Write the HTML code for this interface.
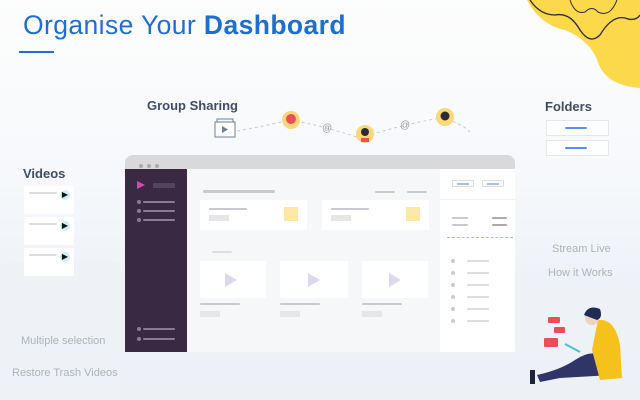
<!DOCTYPE html>
<html><head><meta charset="utf-8"><style>
*{margin:0;padding:0;box-sizing:border-box}
body{width:640px;height:400px;overflow:hidden;position:relative;font-family:"Liberation Sans",sans-serif;background:linear-gradient(180deg,#fdfdfd 0%,#f6f8fb 45%,#eef2f7 70%,#edf0f5 100%)}
.a{position:absolute}
.t{color:#1e6fd0;font-size:26.5px;left:23px;top:10px;letter-spacing:0.4px}
.h{color:#3f4d66;font-weight:bold;font-size:13px}
.g{color:#aeb3bb;font-size:11px}
.bar{position:absolute;height:3px;background:#c9c9cf;border-radius:2px}
.card{position:absolute;background:#fff}
.vc{position:absolute;left:24px;width:50px;height:28px;background:#fff}
.dot{position:absolute;width:4px;height:4px;border-radius:50%;background:#8a7d90}
</style></head><body>
<svg class="a" style="left:0;top:0" width="640" height="400">
<path d="M0 265 Q60 255 120 262 L120 400 L0 400Z" fill="#eef1f5"/>
<path d="M527 0 Q540 25 565 30 Q590 40 598 62 Q605 85 640 88 L640 0Z" fill="#fcd94a"/>
<path d="M530 0 Q540 15 555 15 Q570 12 580 30 Q590 45 600 35 Q612 15 625 18 Q635 22 640 15" fill="none" stroke="#2b2b33" stroke-width="1.3"/>
<path d="M570 0 Q575 15 585 12 Q592 5 598 12 Q610 18 617 0" fill="none" stroke="#2b2b33" stroke-width="1"/>
<path d="M237 131 Q265 126 290 120 Q320 125 360 138 Q400 125 440 118 Q460 122 470 132" fill="none" stroke="#c8ccd2" stroke-width="1" stroke-dasharray="3 3"/>
<rect x="215" y="122" width="20" height="15" fill="#fff" stroke="#6d8097" stroke-width="1"/>
<path d="M217 122 v-3 h16 v3" fill="none" stroke="#6d8097" stroke-width="1"/>
<path d="M222 126 l6 3.5 -6 3.5z" fill="#6d8097"/>
<circle cx="291" cy="120" r="9" fill="#f9d77a"/><circle cx="291" cy="119" r="5" fill="#e84f57"/>
<circle cx="365" cy="134" r="9" fill="#f9d77a"/><circle cx="365" cy="132" r="4" fill="#2b2b33"/><rect x="361" y="138" width="8" height="4" fill="#e84f57"/>
<circle cx="445" cy="117" r="9" fill="#f9d77a"/><circle cx="445" cy="116" r="4.5" fill="#2b2b33"/>
<text x="322" y="131" font-size="10" fill="#9aa0a8" font-family="Liberation Sans">@</text>
<text x="400" y="128" font-size="10" fill="#9aa0a8" font-family="Liberation Sans">@</text>
<rect x="548" y="317" width="12" height="6" rx="1" fill="#e84f57"/>
<rect x="554" y="327" width="11" height="6" rx="1" fill="#e84f57"/>
<rect x="544" y="338" width="14" height="9" rx="1" fill="#e84f57"/>
<path d="M575 360 Q590 350 600 355 L612 375 L560 378 L540 382 L537 375 Q560 370 575 360Z" fill="#2f3566"/>
<path d="M598 320 Q615 318 620 345 L622 378 L600 380 L592 350 Z" fill="#f5c21b"/>
<circle cx="592" cy="318" r="7" fill="#f1d2bc"/>
<path d="M584 315 Q588 304 600 309 Q603 318 597 320 Z" fill="#1f2d55"/>
<path d="M565 344 L580 352" stroke="#41c6d2" stroke-width="2"/>
<rect x="530" y="370" width="5" height="14" fill="#1f2340"/>
</svg>
<div class="a t">Organise Your <b>Dashboard</b></div>
<div class="a" style="left:19px;top:51px;width:35px;height:2px;background:#1e6fd0"></div>
<div class="a h" style="left:147px;top:98px">Group Sharing</div>
<div class="a h" style="left:545px;top:99px">Folders</div>
<div class="a h" style="left:23px;top:166px">Videos</div>
<div class="card" style="left:546px;top:120px;width:63px;height:16px;border:1px solid #e6e8ec"><div class="bar" style="left:18px;top:6px;width:22px;height:2px;background:#5b8ef2"></div></div>
<div class="card" style="left:546px;top:140px;width:63px;height:16px;border:1px solid #e6e8ec"><div class="bar" style="left:18px;top:6px;width:22px;height:2px;background:#5b8ef2"></div></div>
<div class="vc" style="top:186px"><div class="bar" style="left:5px;top:6px;width:28px;height:2px;background:#ddd"></div><div style="position:absolute;left:36px;top:4px;width:10px;height:10px;border-radius:50%;background:#cfeff2;color:#111;font-size:8px;line-height:10px;text-align:center">▶</div></div>
<div class="vc" style="top:217px"><div class="bar" style="left:5px;top:6px;width:28px;height:2px;background:#ddd"></div><div style="position:absolute;left:36px;top:4px;width:10px;height:10px;border-radius:50%;background:#cfeff2;color:#111;font-size:8px;line-height:10px;text-align:center">▶</div></div>
<div class="vc" style="top:248px"><div class="bar" style="left:5px;top:6px;width:28px;height:2px;background:#ddd"></div><div style="position:absolute;left:36px;top:4px;width:10px;height:10px;border-radius:50%;background:#cfeff2;color:#111;font-size:8px;line-height:10px;text-align:center">▶</div></div>
<div class="a g" style="left:21px;top:335px">Multiple selection</div>
<div class="a g" style="left:12px;top:367px">Restore Trash Videos</div>
<div class="a g" style="left:552px;top:243px">Stream Live</div>
<div class="a g" style="left:548px;top:267px">How it Works</div>
<div class="a" style="left:125px;top:155px;width:390px;height:197px;background:#f6f7f8;border-radius:8px 8px 0 0;overflow:hidden">
 <div class="a" style="left:0;top:0;width:390px;height:14px;background:#d9d9db"></div>
 <div class="a" style="left:14px;top:9px;width:4px;height:4px;border-radius:50%;background:#aaa;box-shadow:8px 0 #aaa,16px 0 #aaa"></div>
 <div class="a" style="left:0;top:14px;width:62px;height:183px;background:#3a2942"></div>
 <div class="a" style="left:12px;top:26px;width:8px;height:8px;background:#d84aa8;clip-path:polygon(0 0,100% 50%,0 100%)"></div>
 <div class="a" style="left:28px;top:28px;width:22px;height:5px;background:#54445b"></div>
 <div class="dot" style="left:12px;top:45px"></div><div class="bar" style="left:18px;top:46px;width:32px;height:2px;background:#8a7d90"></div>
 <div class="dot" style="left:12px;top:54px"></div><div class="bar" style="left:18px;top:55px;width:32px;height:2px;background:#8a7d90"></div>
 <div class="dot" style="left:12px;top:63px"></div><div class="bar" style="left:18px;top:64px;width:32px;height:2px;background:#8a7d90"></div>
 <div class="dot" style="left:12px;top:172px"></div><div class="bar" style="left:18px;top:173px;width:32px;height:2px;background:#8a7d90"></div>
 <div class="dot" style="left:12px;top:182px"></div><div class="bar" style="left:18px;top:183px;width:32px;height:2px;background:#8a7d90"></div>
 <div class="a" style="left:315px;top:14px;width:75px;height:183px;background:#fff"></div>
 <div class="a" style="left:315px;top:44px;width:75px;height:1px;background:#f0f0f0"></div>
 <div class="bar" style="left:78px;top:35px;width:72px"></div>
 <div class="bar" style="left:250px;top:36px;width:20px;height:2px"></div>
 <div class="bar" style="left:282px;top:36px;width:20px;height:2px"></div>
 <div class="card" style="left:75px;top:45px;width:107px;height:30px"><div class="bar" style="left:9px;top:8px;width:38px;height:2px"></div><div class="a" style="left:9px;top:15px;width:20px;height:6px;background:#e6e6e8"></div><div class="a" style="left:84px;top:7px;width:14px;height:14px;background:#fde8a8"></div></div>
 <div class="card" style="left:197px;top:45px;width:107px;height:30px"><div class="bar" style="left:9px;top:8px;width:38px;height:2px"></div><div class="a" style="left:9px;top:15px;width:20px;height:6px;background:#e6e6e8"></div><div class="a" style="left:84px;top:7px;width:14px;height:14px;background:#fde8a8"></div></div>
 <div class="bar" style="left:87px;top:96px;width:20px;height:2px;background:#ddd"></div>
 <div class="card" style="left:75px;top:106px;width:66px;height:37px"><div class="a" style="left:25px;top:12px;width:12px;height:14px;background:#dcd8f0;clip-path:polygon(0 0,100% 50%,0 100%)"></div></div>
 <div class="card" style="left:155px;top:106px;width:68px;height:37px"><div class="a" style="left:28px;top:12px;width:12px;height:14px;background:#dcd8f0;clip-path:polygon(0 0,100% 50%,0 100%)"></div></div>
 <div class="card" style="left:237px;top:106px;width:66px;height:37px"><div class="a" style="left:27px;top:12px;width:12px;height:14px;background:#dcd8f0;clip-path:polygon(0 0,100% 50%,0 100%)"></div></div>
 <div class="bar" style="left:75px;top:148px;width:40px;height:2px"></div>
 <div class="bar" style="left:155px;top:148px;width:40px;height:2px"></div>
 <div class="bar" style="left:237px;top:148px;width:40px;height:2px"></div>
 <div class="a" style="left:75px;top:156px;width:20px;height:6px;background:#e6e6e8"></div>
 <div class="a" style="left:155px;top:156px;width:20px;height:6px;background:#e6e6e8"></div>
 <div class="a" style="left:237px;top:156px;width:20px;height:6px;background:#e6e6e8"></div>
 <div class="a" style="left:327px;top:25px;width:22px;height:7px;border:1px solid #ddd"><div style="margin:2px 4px;height:2px;background:#9fc3f3"></div></div>
 <div class="a" style="left:357px;top:25px;width:22px;height:7px;border:1px solid #ddd"><div style="margin:2px 4px;height:2px;background:#9fc3f3"></div></div>
 <div class="bar" style="left:327px;top:62px;width:16px;height:2px"></div><div class="bar" style="left:367px;top:62px;width:15px;height:2px;background:#aaa"></div>
 <div class="bar" style="left:327px;top:69px;width:16px;height:2px"></div><div class="bar" style="left:367px;top:69px;width:15px;height:2px;background:#aaa"></div>
 <div class="a" style="left:322px;top:82px;width:66px;border-top:1px dashed #9fc3f3"></div>
 <div class="dot" style="left:326px;top:104px;background:#ccc"></div><div class="bar" style="left:342px;top:105px;width:22px;height:2px;background:#ddd"></div>
 <div class="dot" style="left:326px;top:116px;background:#ccc"></div><div class="bar" style="left:342px;top:117px;width:22px;height:2px;background:#ddd"></div>
 <div class="dot" style="left:326px;top:128px;background:#ccc"></div><div class="bar" style="left:342px;top:129px;width:22px;height:2px;background:#ddd"></div>
 <div class="dot" style="left:326px;top:140px;background:#ccc"></div><div class="bar" style="left:342px;top:141px;width:22px;height:2px;background:#ddd"></div>
 <div class="dot" style="left:326px;top:152px;background:#ccc"></div><div class="bar" style="left:342px;top:153px;width:22px;height:2px;background:#ddd"></div>
 <div class="dot" style="left:326px;top:164px;background:#ccc"></div><div class="bar" style="left:342px;top:165px;width:22px;height:2px;background:#ddd"></div>
</div>
</body></html>
